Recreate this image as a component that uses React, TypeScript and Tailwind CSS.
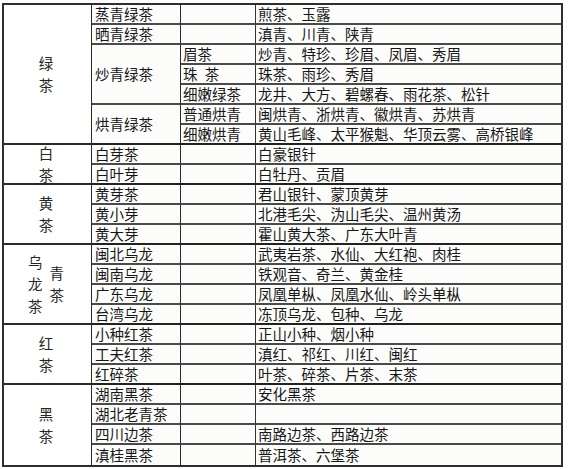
import React from 'react';

type Row = { group?: { chars: string[][]; span: number }; sub?: { text: string; span: number }; third: string; items: string; end?: boolean };

const rows: Row[] = [
  { group: { chars: [['绿', '茶']], span: 7 }, sub: { text: '蒸青绿茶', span: 1 }, third: '', items: '煎茶、玉露' },
  { sub: { text: '晒青绿茶', span: 1 }, third: '', items: '滇青、川青、陕青' },
  { sub: { text: '炒青绿茶', span: 3 }, third: '眉茶', items: '炒青、特珍、珍眉、凤眉、秀眉' },
  { third: '珠\u2002茶', items: '珠茶、雨珍、秀眉' },
  { third: '细嫩绿茶', items: '龙井、大方、碧螺春、雨花茶、松针' },
  { sub: { text: '烘青绿茶', span: 2 }, third: '普通烘青', items: '闽烘青、浙烘青、徽烘青、苏烘青' },
  { third: '细嫩烘青', items: '黄山毛峰、太平猴魁、华顶云雾、高桥银峰', end: true },
  { group: { chars: [['白', '茶']], span: 2 }, sub: { text: '白芽茶', span: 1 }, third: '', items: '白豪银针' },
  { sub: { text: '白叶芽', span: 1 }, third: '', items: '白牡丹、贡眉', end: true },
  { group: { chars: [['黄', '茶']], span: 3 }, sub: { text: '黄芽茶', span: 1 }, third: '', items: '君山银针、蒙顶黄芽' },
  { sub: { text: '黄小芽', span: 1 }, third: '', items: '北港毛尖、沩山毛尖、温州黄汤' },
  { sub: { text: '黄大芽', span: 1 }, third: '', items: '霍山黄大茶、广东大叶青', end: true },
  { group: { chars: [['乌', '龙', '茶'], ['青', '茶']], span: 4 }, sub: { text: '闽北乌龙', span: 1 }, third: '', items: '武夷岩茶、水仙、大红袍、肉桂' },
  { sub: { text: '闽南乌龙', span: 1 }, third: '', items: '铁观音、奇兰、黄金桂' },
  { sub: { text: '广东乌龙', span: 1 }, third: '', items: '凤凰单枞、凤凰水仙、岭头单枞' },
  { sub: { text: '台湾乌龙', span: 1 }, third: '', items: '冻顶乌龙、包种、乌龙', end: true },
  { group: { chars: [['红', '茶']], span: 3 }, sub: { text: '小种红茶', span: 1 }, third: '', items: '正山小种、烟小种' },
  { sub: { text: '工夫红茶', span: 1 }, third: '', items: '滇红、祁红、川红、闽红' },
  { sub: { text: '红碎茶', span: 1 }, third: '', items: '叶茶、碎茶、片茶、末茶', end: true },
  { group: { chars: [['黑', '茶']], span: 4 }, sub: { text: '湖南黑茶', span: 1 }, third: '', items: '安化黑茶' },
  { sub: { text: '湖北老青茶', span: 1 }, third: '', items: '' },
  { sub: { text: '四川边茶', span: 1 }, third: '', items: '南路边茶、西路边茶' },
  { sub: { text: '滇桂黑茶', span: 1 }, third: '', items: '普洱茶、六堡茶', end: true },
];

const spanClass: Record<number, string> = {
  1: 'row-span-1',
  2: 'row-span-2',
  3: 'row-span-3',
  4: 'row-span-4',
  7: 'row-span-7',
};

export default function App() {
  const last = rows.length - 1;
  return (
    <div
      className="w-[570px] h-[469px] bg-white pt-[3px] pl-[2px] overflow-hidden text-[#161616]"
      style={{ fontFamily: '"Noto Sans CJK SC", "Noto Sans", sans-serif' }}
    >
      <div className="grid w-[561px] grid-cols-[88px_89px_75px_305px] grid-rows-[repeat(23,20px)] border-2 border-[#2e2e2e] bg-[#fcfdfb] text-[14.5px] leading-[18px]">
        {rows.map((r, i) => {
          const cells: React.ReactNode[] = [];
          if (r.group) {
            const g = r.group;
            cells.push(
              <div
                key={`g${i}`}
                className={`${spanClass[g.span]} ${i + g.span - 1 === last ? '' : 'border-b-2'} border-r border-[#2a2a2a] flex items-center justify-center gap-[7px] pr-[3px] bg-white`}
              >
                {g.chars.map((col, ci) => (
                  <div key={ci} className="flex flex-col items-center leading-[22px] text-[#262626]">
                    {col.map((c, k) => (
                      <span key={k}>{c}</span>
                    ))}
                  </div>
                ))}
              </div>
            );
          }
          if (r.sub) {
            const s = r.sub;
            cells.push(
              <div
                key={`s${i}`}
                className={`${spanClass[s.span]} ${i + s.span - 1 === last ? '' : 'border-b-2'} ${rows[i + s.span - 1].end ? 'border-[#222]' : 'border-[#4a4a4a]'} border-r-[#2a2a2a] border-r flex items-center pl-[3px] whitespace-nowrap`}
              >
                {s.text}
              </div>
            );
          }
          const b = i === last ? '' : 'border-b-2';
          const bc = r.end ? 'border-b-[#222]' : 'border-b-[#4a4a4a]';
          cells.push(
            <div key={`t${i}`} className={`${b} ${bc} border-r border-r-[#333] flex items-center pl-[2px] whitespace-pre`}>
              {r.third}
            </div>
          );
          cells.push(
            <div key={`c${i}`} className={`${b} ${bc} flex items-center pl-[2px] whitespace-nowrap`}>
              {r.items}
            </div>
          );
          return cells;
        })}
      </div>
    </div>
  );
}
